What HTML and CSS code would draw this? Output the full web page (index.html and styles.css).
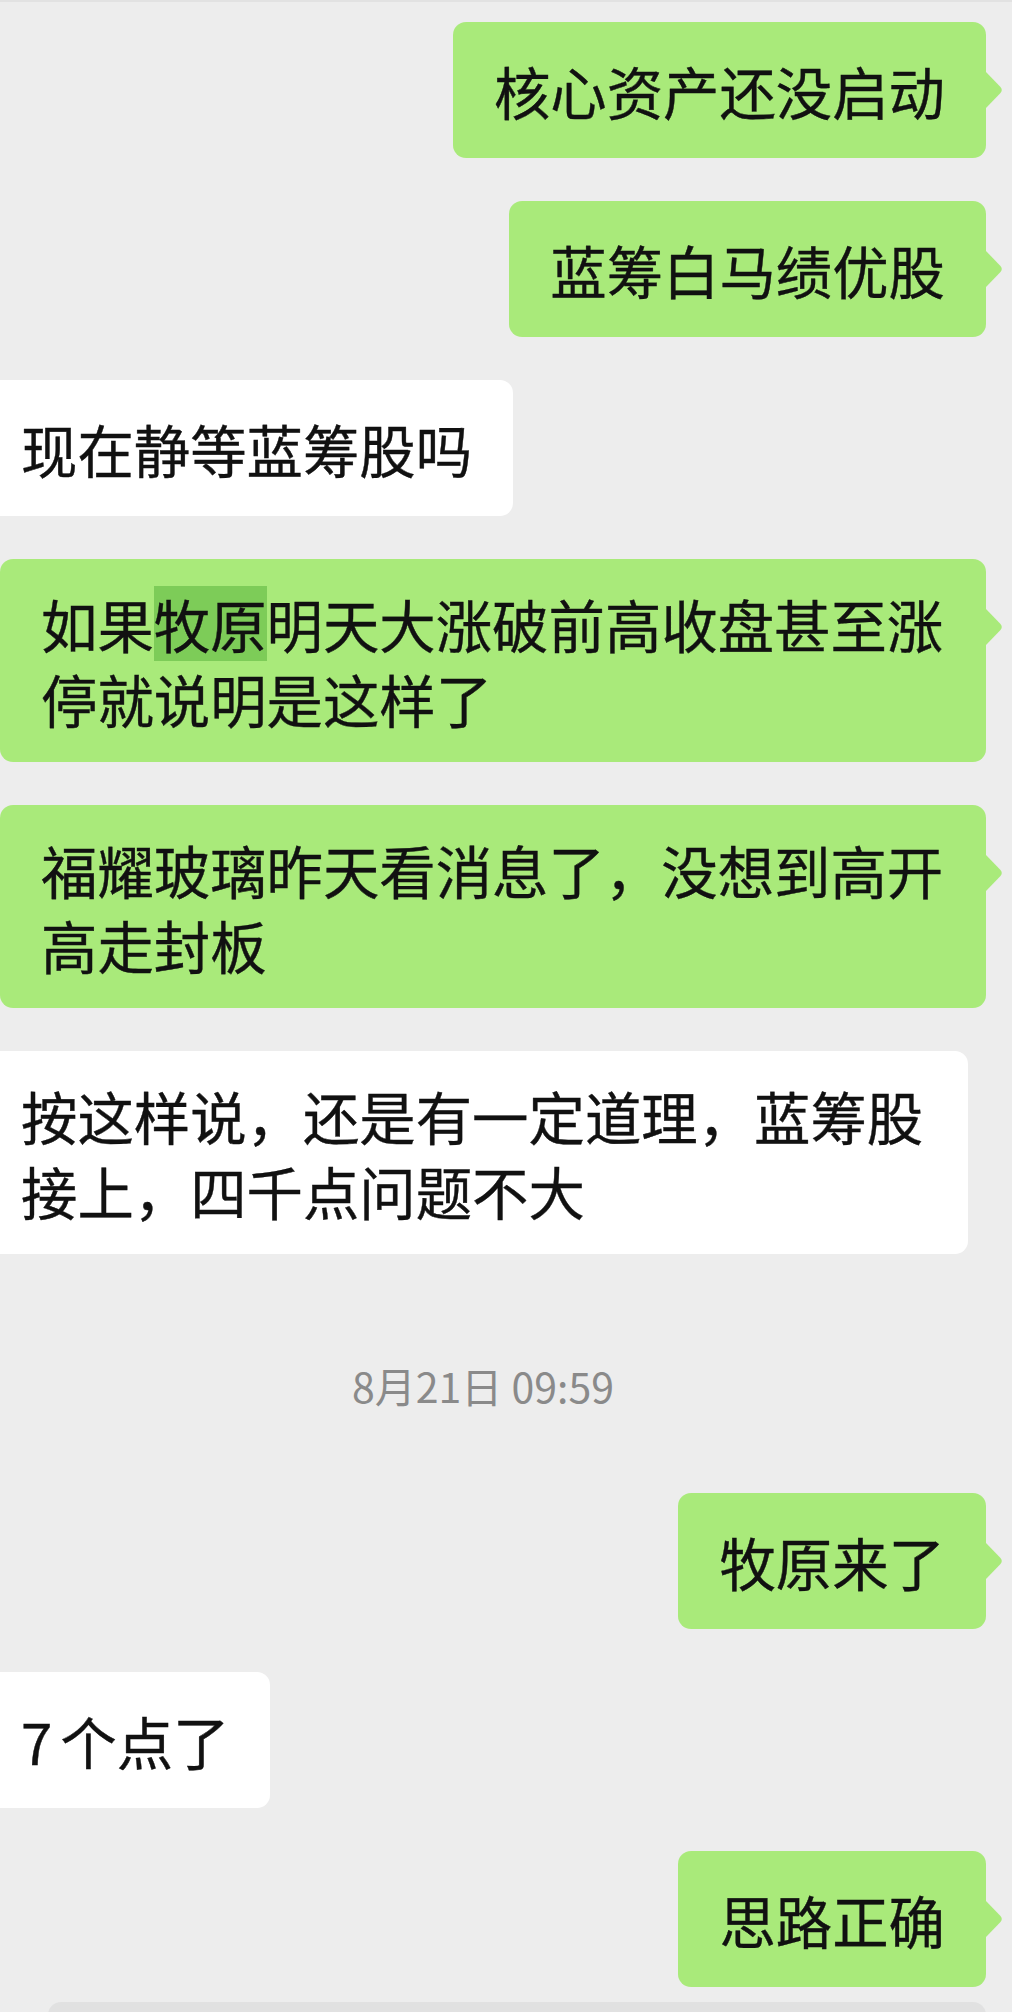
FILE: index.html
```html
<!DOCTYPE html>
<html lang="zh-CN">
<head>
<meta charset="utf-8">
<title>聊天</title>
<link rel="stylesheet" href="styles.css">
</head>
<body>
<div class="chat">

  <div class="row me">
    <div class="bubble green">
      <p class="text">核心资产还没启动</p>
      <svg class="tail" viewBox="0 0 17 36" width="17" height="36"><path d="M0 0 L14.5 15 Q17 18 14.5 21 L0 36 Z"/></svg>
    </div>
  </div>

  <div class="row me">
    <div class="bubble green">
      <p class="text">蓝筹白马绩优股</p>
      <svg class="tail" viewBox="0 0 17 36" width="17" height="36"><path d="M0 0 L14.5 15 Q17 18 14.5 21 L0 36 Z"/></svg>
    </div>
  </div>

  <div class="row other">
    <div class="bubble white">
      <p class="text">现在静等蓝筹股吗</p>
    </div>
  </div>

  <div class="row me">
    <div class="bubble green">
      <p class="text">如果<span class="mark">牧原</span>明天大涨破前高收盘甚至涨停就说明是这样了</p>
      <svg class="tail" viewBox="0 0 17 36" width="17" height="36"><path d="M0 0 L14.5 15 Q17 18 14.5 21 L0 36 Z"/></svg>
    </div>
  </div>

  <div class="row me">
    <div class="bubble green">
      <p class="text">福耀玻璃昨天看消息了，没想到高开高走封板</p>
      <svg class="tail" viewBox="0 0 17 36" width="17" height="36"><path d="M0 0 L14.5 15 Q17 18 14.5 21 L0 36 Z"/></svg>
    </div>
  </div>

  <div class="row other">
    <div class="bubble white">
      <p class="text">按这样说，还是有一定道理，蓝筹股接上，四千点问题不大</p>
    </div>
  </div>

  <div class="time">8月21日 09:59</div>

  <div class="row me">
    <div class="bubble green">
      <p class="text">牧原来了</p>
      <svg class="tail" viewBox="0 0 17 36" width="17" height="36"><path d="M0 0 L14.5 15 Q17 18 14.5 21 L0 36 Z"/></svg>
    </div>
  </div>

  <div class="row other">
    <div class="bubble white">
      <p class="text"><span class="digit">7</span>个点了</p>
    </div>
  </div>

  <div class="row me">
    <div class="bubble green">
      <p class="text">思路正确</p>
      <svg class="tail" viewBox="0 0 17 36" width="17" height="36"><path d="M0 0 L14.5 15 Q17 18 14.5 21 L0 36 Z"/></svg>
    </div>
  </div>

</div>
<div class="inputbar"></div>
</body>
</html>
```

FILE: styles.css
```css
html, body {
    margin: 0;
    height: 2012px;
    overflow: hidden;
}
body {
    background: #ededed;
    font-family: "Noto Sans CJK SC", "Noto Sans", sans-serif;
    color: #111;
}

.chat {
    border-top: 2px solid #e2e2e2;
    padding-top: 20px;
    display: flex;
    flex-direction: column;
    gap: 43px;
}

.row { display: flex; }
.row.me {
    justify-content: flex-end;
    padding-right: 26px;
}
.row.other {
    justify-content: flex-start;
    margin-left: -20px;
    padding-right: 44px;
}

.bubble {
    position: relative;
    display: flex;
    align-items: center;
    box-sizing: border-box;
    min-height: 136px;
    padding: 27px 41px 26px;
    border-radius: 13px;
}
.bubble.green { background: #a9ea7a; }
.bubble.white { background: #ffffff; }

.text {
    margin: 0;
    font-size: 56.4px;
    line-height: 75px;
    -webkit-text-stroke: 0.4px currentColor;
}

/* selected words: fills the whole line box */
.mark {
    display: inline-block;
    line-height: 75px;
    background: #7dcc58;
}

.digit { margin-right: 8px; }

.tail {
    position: absolute;
    right: -17px;
    top: 50px;
    fill: #a9ea7a;
}

.time {
    margin-left: -20px;
    padding: 68px 26px 44px 0;
    text-align: center;
    font-size: 41px;
    line-height: 41px;
    color: #8a8a8a;
}

.inputbar {
    margin: 15px 26px 0 48px;
    height: 60px;
    border-radius: 13px;
    background: #e1e1e1;
}
```
